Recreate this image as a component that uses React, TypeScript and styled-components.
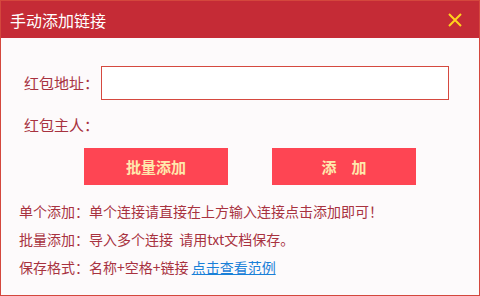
import styled, { createGlobalStyle } from "styled-components";

const GlobalStyle = createGlobalStyle`
  html, body {
    margin: 0;
    padding: 0;
    background: #ffffff;
  }
  * {
    box-sizing: border-box;
  }
`;

const Dialog = styled.div`
  width: 480px;
  height: 296px;
  border: 1px solid #d4473d;
  background: #fdfafb;
  display: flex;
  flex-direction: column;
  font-family: "Noto Sans CJK SC", "Noto Sans", sans-serif;
  overflow: hidden;
`;

const TitleBar = styled.div`
  height: 37px;
  background: #c52b36;
  display: flex;
  align-items: center;
  justify-content: space-between;
  padding: 0 16px 0 9px;
`;

const Title = styled.div`
  color: #ffffff;
  font-size: 16px;
  line-height: 20px;
`;

const CloseButton = styled.button`
  width: 16px;
  height: 16px;
  padding: 0;
  border: none;
  background: transparent;
  display: flex;
  align-items: center;
  justify-content: center;
  cursor: pointer;
`;

const Body = styled.div`
  display: flex;
  flex-direction: column;
  padding: 28px 29px 0 18px;
`;

const FieldRow = styled.div<{ $height: number; $top: number }>`
  display: flex;
  align-items: center;
  height: ${(p) => p.$height}px;
  margin-top: ${(p) => p.$top}px;
  padding-left: 5px;
`;

const Label = styled.label`
  width: 77px;
  color: #a8323f;
  font-size: 15px;
  line-height: 20px;
  white-space: nowrap;
`;

const Input = styled.input`
  width: 348px;
  height: 34px;
  border: 1px solid #d5493f;
  background: #ffffff;
  outline: none;
  padding: 0 6px;
  font-size: 14px;
`;

const ButtonRow = styled.div`
  display: flex;
  gap: 44px;
  margin-top: 10px;
  padding-left: 65px;
`;

const ActionButton = styled.button`
  width: 144px;
  height: 37px;
  border: none;
  background: #fe4553;
  color: #ffe8ad;
  font-family: "Noto Sans CJK SC", sans-serif;
  font-size: 15px;
  font-weight: bold;
  cursor: pointer;
  padding: 0;
`;

const Info = styled.div`
  margin-top: 12px;
  display: flex;
  flex-direction: column;
`;

const InfoLine = styled.p`
  margin: 0;
  color: #a8323f;
  font-size: 14px;
  line-height: 28px;
  white-space: nowrap;
`;

const Link = styled.a`
  color: #1a80d8;
  text-decoration: underline;
  cursor: pointer;
`;

export default function App() {
  return (
    <>
      <GlobalStyle />
      <Dialog>
        <TitleBar>
          <Title>手动添加链接</Title>
          <CloseButton aria-label="关闭">
            <svg width="14" height="14" viewBox="0 0 14 14">
              <path d="M1 1 L13 13 M13 1 L1 13" stroke="#ffd21c" strokeWidth="2" />
            </svg>
          </CloseButton>
        </TitleBar>
        <Body>
          <FieldRow $height={34} $top={0}>
            <Label>红包地址：</Label>
            <Input />
          </FieldRow>
          <FieldRow $height={26} $top={12}>
            <Label>红包主人：</Label>
          </FieldRow>
          <ButtonRow>
            <ActionButton>批量添加</ActionButton>
            <ActionButton>添　加</ActionButton>
          </ButtonRow>
          <Info>
            <InfoLine>单个添加：单个连接请直接在上方输入连接点击添加即可！</InfoLine>
            <InfoLine>批量添加：导入多个连接&nbsp;&nbsp;请用txt文档保存。</InfoLine>
            <InfoLine>
              保存格式：名称+空格+链接 <Link>点击查看范例</Link>
            </InfoLine>
          </Info>
        </Body>
      </Dialog>
    </>
  );
}
